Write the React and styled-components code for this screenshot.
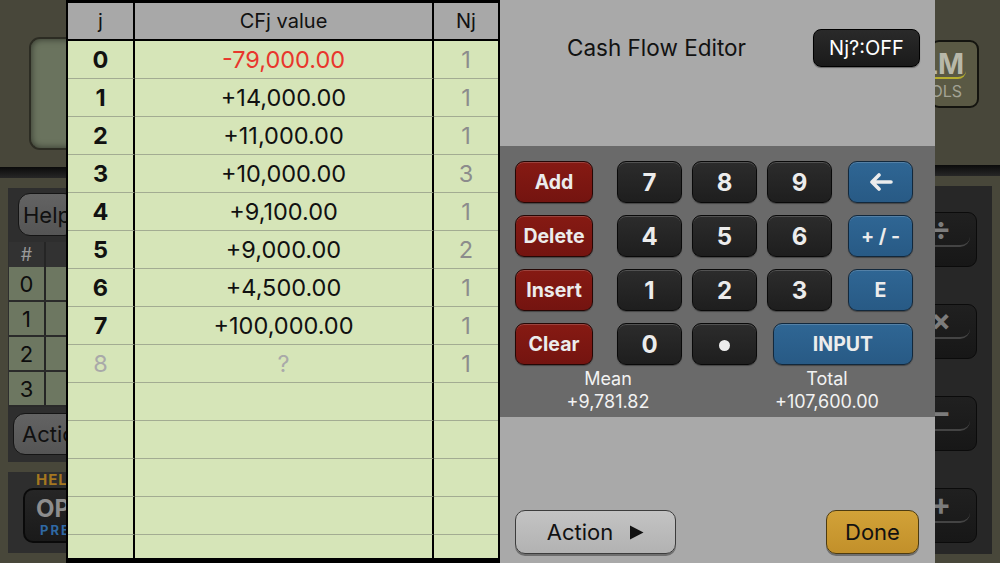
import React from "react";
import styled, { createGlobalStyle, css } from "styled-components";

const SANS = `"Inter", "Liberation Sans", Arial, sans-serif`;

const Global = createGlobalStyle`
  * { box-sizing: border-box; }
  html, body { margin: 0; padding: 0; width: 1000px; height: 563px; overflow: hidden; background: #48473a; }
  #root { width: 1000px; height: 563px; }
`;

/* ---------- background calculator (dimmed, behind the editor) ---------- */

const Stage = styled.div`
  position: relative;
  width: 1000px;
  height: 563px;
  display: flex;
  background: #48473a;
  font-family: ${SANS};
  overflow: hidden;
`;

const LeftDeck = styled.div`
  width: 240px;
  flex-shrink: 0;
  display: flex;
  flex-direction: column;
`;

const Display = styled.div`
  margin: 37px 0 0 29px;
  height: 113px;
  border-radius: 11px;
  background: #6a735e;
  border: 2px solid #2c2c23;
  box-shadow: inset 0 0 7px rgba(0, 0, 0, 0.55);
`;

const Rail = styled.div`
  margin-top: ${(p) => p.$top}px;
  height: 11px;
  background: linear-gradient(#0b0b0b, #262626);
`;

const Console = styled.div`
  margin: 10px 0 0 8px;
  height: 274px;
  background: #2e2e2e;
  padding-top: 5px;
  display: flex;
  flex-direction: column;
`;

const GreyPill = styled.div`
  margin-left: ${(p) => p.$left}px;
  width: ${(p) => p.$w}px;
  height: ${(p) => p.$h}px;
  margin-top: ${(p) => p.$top || 0}px;
  border-radius: 12px;
  background: linear-gradient(#636363, #555);
  border: 1.5px solid #151515;
  color: #101010;
  font-size: 22px;
  display: flex;
  align-items: center;
  padding-left: ${(p) => p.$pad}px;
`;

const MiniTable = styled.div`
  margin: 6px 0 0 1px;
  display: flex;
  flex-direction: column;
`;

const MiniRow = styled.div`
  display: grid;
  grid-template-columns: 37px 1fr;
  height: ${(p) => (p.$head ? 25 : 35)}px;
  background: ${(p) => (p.$head ? "#323232" : "#6d7761")};
  border-bottom: ${(p) => (p.$head ? "none" : "2px solid #2a2a2a")};
`;

const MiniCell = styled.div`
  display: flex;
  align-items: center;
  justify-content: center;
  border-right: 2px solid #252525;
  color: ${(p) => (p.$head ? "#9a9a9a" : "#0d0d0d")};
  font-size: ${(p) => (p.$head ? 18 : 22)}px;
`;

const KeyBank = styled.div`
  margin: 10px 0 0 8px;
  height: 81px;
  background: #2e2e2e;
  display: flex;
  flex-direction: column;
`;

const BankLabel = styled.div`
  margin-left: 28px;
  height: 16px;
  line-height: 16px;
  font-size: 15px;
  font-weight: 700;
  letter-spacing: 1px;
  color: #a5771f;
`;

const BigKey = styled.div`
  margin-left: 15px;
  width: 110px;
  height: 55px;
  border-radius: 10px;
  background: linear-gradient(#262626, #1a1a1a);
  border: 2px solid #0a0a0a;
  display: flex;
  flex-direction: column;
  padding: 6px 0 0 11px;
`;

const BigKeyMain = styled.span`
  font-size: 24px;
  font-weight: 700;
  color: #8d8d8d;
  line-height: 26px;
`;

const BigKeySub = styled.span`
  margin-left: 4px;
  font-size: 13px;
  font-weight: 700;
  letter-spacing: 2px;
  color: #2f69a4;
  line-height: 16px;
`;

const Spacer = styled.div`
  flex: 1;
`;

const RightDeck = styled.div`
  width: 105px;
  flex-shrink: 0;
  display: flex;
  flex-direction: column;
`;

const Logo = styled.div`
  margin: 40px 0 0 35px;
  width: 49px;
  height: 68px;
  border-radius: 9px;
  background: #5a5944;
  border: 2px solid #14140f;
  display: flex;
  flex-direction: column;
  align-items: flex-end;
  padding: 9px 15px 0 0;
`;

const LogoMain = styled.span`
  font-size: 28px;
  font-weight: 700;
  color: #b8b8a9;
  line-height: 26px;
  border-bottom: 2px solid #b7ae2e;
  border-bottom-right-radius: 8px;
  padding-right: 2px;
  margin-right: -4px;
`;

const LogoSub = styled.span`
  margin-top: 4px;
  font-size: 16px;
  color: #a3a394;
  line-height: 16px;
`;

const OpPanel = styled.div`
  margin-top: 10px;
  width: 97px;
  height: 368px;
  background: #272727;
  padding: 26px 0 0 10px;
  display: flex;
  flex-direction: column;
  gap: 37px;
`;

const OpKey = styled.div`
  position: relative;
  width: 72px;
  height: 55px;
  border-radius: 9px;
  background: linear-gradient(#202020, #171717);
  border: 1.5px solid #0b0b0b;
  display: flex;
  align-items: flex-start;
  justify-content: center;
  padding-top: 0;
  color: #7c7c7c;
  font-size: 30px;
  font-weight: 700;
  line-height: 30px;
  &::after {
    content: "";
    position: absolute;
    left: 0;
    right: 6px;
    bottom: 19px;
    height: 8px;
    border-bottom: 2px solid #444;
    border-bottom-right-radius: 10px;
  }
`;

/* ---------- cash flow editor overlay ---------- */

const Overlay = styled.div`
  position: absolute;
  top: 0;
  left: 66px;
  width: 869px;
  height: 563px;
  display: flex;
`;

const Sheet = styled.div`
  width: 434px;
  height: 563px;
  border-style: solid;
  border-color: #000;
  border-width: 3px 2px 5px 2px;
  background: #d6e5b8;
  display: flex;
  flex-direction: column;
`;

const SheetRow = styled.div`
  display: grid;
  grid-template-columns: 67px 299px 64px;
  flex-shrink: 0;
  height: 38px;
  background: ${(p) => (p.$head ? "#a8a8a8" : "transparent")};
`;

const SheetBody = styled.div`
  flex: 1;
  overflow: hidden;
  display: flex;
  flex-direction: column;
`;

const Cell = styled.div`
  display: flex;
  align-items: center;
  justify-content: center;
  border-right: ${(p) => (p.$last ? "none" : "2px solid #000")};
  border-bottom: ${(p) => (p.$head ? "2px solid #000" : "1px solid #a3ac92")};
  font-size: ${(p) => (p.$head ? 20 : 23.5)}px;
  font-weight: ${(p) => (p.$bold ? 700 : 400)};
  color: ${(p) => p.$color || "#111"};
`;

const Panel = styled.div`
  flex: 1;
  display: flex;
  flex-direction: column;
`;

const PanelTop = styled.div`
  height: 146px;
  background: #a9a9a9;
  display: flex;
  align-items: flex-start;
  padding: 29px 15px 0 0;
`;

const Title = styled.div`
  flex: 1;
  text-align: center;
  font-size: 22.5px;
  line-height: 37px;
  color: #121212;
`;

const Toggle = styled.div`
  width: 107px;
  height: 38px;
  border-radius: 8px;
  background: linear-gradient(#2a2a2a, #1a1a1a);
  border: 1.5px solid #000;
  box-shadow: 0 1px 1px rgba(0, 0, 0, 0.4);
  color: #fff;
  font-size: 20px;
  display: flex;
  align-items: center;
  justify-content: center;
`;

const Keypad = styled.div`
  height: 271px;
  background: #6a6a6a;
  padding-top: 15px;
  display: flex;
  flex-direction: column;
`;

const KeyGrid = styled.div`
  margin-left: 15px;
  display: grid;
  grid-template-columns: 92px 65px 65px 65px 71px;
  grid-auto-rows: 42px;
  column-gap: 10px;
  row-gap: 12px;
`;

const tones = {
  red: css`
    width: 78px;
    justify-self: start;
    background: linear-gradient(#861a13, #741410);
    border: 1.5px solid #250705;
    font-size: 19.5px;
  `,
  dark: css`
    background: linear-gradient(#2c2c2c, #1e1e1e);
    border: 1.5px solid #090909;
    font-size: 24px;
  `,
  blue: css`
    width: 65px;
    justify-self: end;
    background: linear-gradient(#2f6694, #285a85);
    border: 1.5px solid #12283c;
    font-size: 19.5px;
  `,
};

const Key = styled.div`
  height: 42px;
  border-radius: 9px;
  box-shadow: inset 0 1px 0 rgba(255, 255, 255, 0.18), 0 1px 1px rgba(0, 0, 0, 0.35);
  display: flex;
  align-items: center;
  justify-content: center;
  color: #ececec;
  font-weight: 700;
  ${(p) => tones[p.$tone]}
  ${(p) =>
    p.$span &&
    css`
      grid-column: 4 / span 2;
      width: auto;
      justify-self: stretch;
      margin-left: 6px;
    `}
`;

const Dot = styled.span`
  width: 11px;
  height: 11px;
  border-radius: 50%;
  background: #ececec;
  margin-top: 3px;
`;

const Stats = styled.div`
  margin: 2px 0 0 8px;
  display: flex;
  gap: 19px;
`;

const Stat = styled.div`
  width: 200px;
  text-align: center;
  color: #f2f2f2;
  font-size: 18px;
  line-height: 23px;
`;

const PanelBottom = styled.div`
  flex: 1;
  background: #a9a9a9;
  display: flex;
  align-items: flex-end;
  justify-content: space-between;
  padding: 0 16px 9px 15px;
`;

const FootButton = styled.div`
  width: ${(p) => p.$w}px;
  height: 44px;
  border-radius: 10px;
  background: ${(p) =>
    p.$gold ? "linear-gradient(#d2a238, #c2902a)" : "linear-gradient(#c3c3c3, #b2b2b2)"};
  border: 1.5px solid ${(p) => (p.$gold ? "#4d3b10" : "#3c3c3c")};
  box-shadow: 0 2px 0 rgba(0, 0, 0, 0.35);
  display: flex;
  align-items: center;
  justify-content: center;
  gap: 16px;
  color: #111;
  font-size: 22px;
`;

const rows = [
  { j: "0", v: "-79,000.00", n: "1", neg: true },
  { j: "1", v: "+14,000.00", n: "1" },
  { j: "2", v: "+11,000.00", n: "1" },
  { j: "3", v: "+10,000.00", n: "3" },
  { j: "4", v: "+9,100.00", n: "1" },
  { j: "5", v: "+9,000.00", n: "2" },
  { j: "6", v: "+4,500.00", n: "1" },
  { j: "7", v: "+100,000.00", n: "1" },
  { j: "8", v: "?", n: "1", ghost: true },
];

const BackArrow = () => (
  <svg width="24" height="18" viewBox="0 0 24 18">
    <path
      d="M10 2 L3 9 L10 16 M3.5 9 H22"
      fill="none"
      stroke="#ececec"
      strokeWidth="3.6"
      strokeLinecap="round"
      strokeLinejoin="round"
    />
  </svg>
);

const PlayTri = () => (
  <svg width="15" height="15" viewBox="0 0 15 15">
    <path d="M1 0.5 L14.5 7.5 L1 14.5 Z" fill="#111" />
  </svg>
);

export default function App() {
  const blanks = Array.from({ length: 5 });
  return (
    <>
      <Global />
      <Stage>
        <LeftDeck>
          <Display />
          <Rail $top={17} />
          <Console>
            <GreyPill $left={10} $w={58} $h={43} $pad={4}>
              Help
            </GreyPill>
            <MiniTable>
              <MiniRow $head>
                <MiniCell $head>#</MiniCell>
                <MiniCell $head />
              </MiniRow>
              {["0", "1", "2", "3"].map((d) => (
                <MiniRow key={d}>
                  <MiniCell>{d}</MiniCell>
                  <MiniCell />
                </MiniRow>
              ))}
            </MiniTable>
            <GreyPill $left={5} $w={100} $h={42} $pad={8} $top={6}>
              Action
            </GreyPill>
          </Console>
          <KeyBank>
            <BankLabel>HELP</BankLabel>
            <BigKey>
              <BigKeyMain>OPT</BigKeyMain>
              <BigKeySub>PREF</BigKeySub>
            </BigKey>
          </KeyBank>
        </LeftDeck>
        <Spacer />
        <RightDeck>
          <Logo>
            <LogoMain>LM</LogoMain>
            <LogoSub>OLS</LogoSub>
          </Logo>
          <Rail $top={57} />
          <OpPanel>
            <OpKey>÷</OpKey>
            <OpKey>×</OpKey>
            <OpKey>−</OpKey>
            <OpKey>+</OpKey>
          </OpPanel>
        </RightDeck>

        <Overlay>
          <Sheet>
            <SheetRow $head>
              <Cell $head>j</Cell>
              <Cell $head>CFj value</Cell>
              <Cell $head $last>Nj</Cell>
            </SheetRow>
            <SheetBody>
              {rows.map((r) => (
                <SheetRow key={r.j}>
                  <Cell $bold={!r.ghost} $color={r.ghost ? "#a9a9a9" : "#111"}>
                    {r.j}
                  </Cell>
                  <Cell $color={r.neg ? "#e8362c" : r.ghost ? "#a9a9a9" : "#111"}>{r.v}</Cell>
                  <Cell $last $color="#8c8c8c">
                    {r.n}
                  </Cell>
                </SheetRow>
              ))}
              {blanks.map((_, i) => (
                <SheetRow key={"b" + i}>
                  <Cell />
                  <Cell />
                  <Cell $last />
                </SheetRow>
              ))}
            </SheetBody>
          </Sheet>

          <Panel>
            <PanelTop>
              <Title>Cash Flow Editor</Title>
              <Toggle>Nj?:OFF</Toggle>
            </PanelTop>
            <Keypad>
              <KeyGrid>
                <Key $tone="red">Add</Key>
                <Key $tone="dark">7</Key>
                <Key $tone="dark">8</Key>
                <Key $tone="dark">9</Key>
                <Key $tone="blue">
                  <BackArrow />
                </Key>

                <Key $tone="red">Delete</Key>
                <Key $tone="dark">4</Key>
                <Key $tone="dark">5</Key>
                <Key $tone="dark">6</Key>
                <Key $tone="blue">+ / -</Key>

                <Key $tone="red">Insert</Key>
                <Key $tone="dark">1</Key>
                <Key $tone="dark">2</Key>
                <Key $tone="dark">3</Key>
                <Key $tone="blue">E</Key>

                <Key $tone="red">Clear</Key>
                <Key $tone="dark">0</Key>
                <Key $tone="dark">
                  <Dot />
                </Key>
                <Key $tone="blue" $span>
                  INPUT
                </Key>
              </KeyGrid>
              <Stats>
                <Stat>
                  Mean
                  <br />
                  +9,781.82
                </Stat>
                <Stat>
                  Total
                  <br />
                  +107,600.00
                </Stat>
              </Stats>
            </Keypad>
            <PanelBottom>
              <FootButton $w={161}>
                Action
                <PlayTri />
              </FootButton>
              <FootButton $w={93} $gold>
                Done
              </FootButton>
            </PanelBottom>
          </Panel>
        </Overlay>
      </Stage>
    </>
  );
}
